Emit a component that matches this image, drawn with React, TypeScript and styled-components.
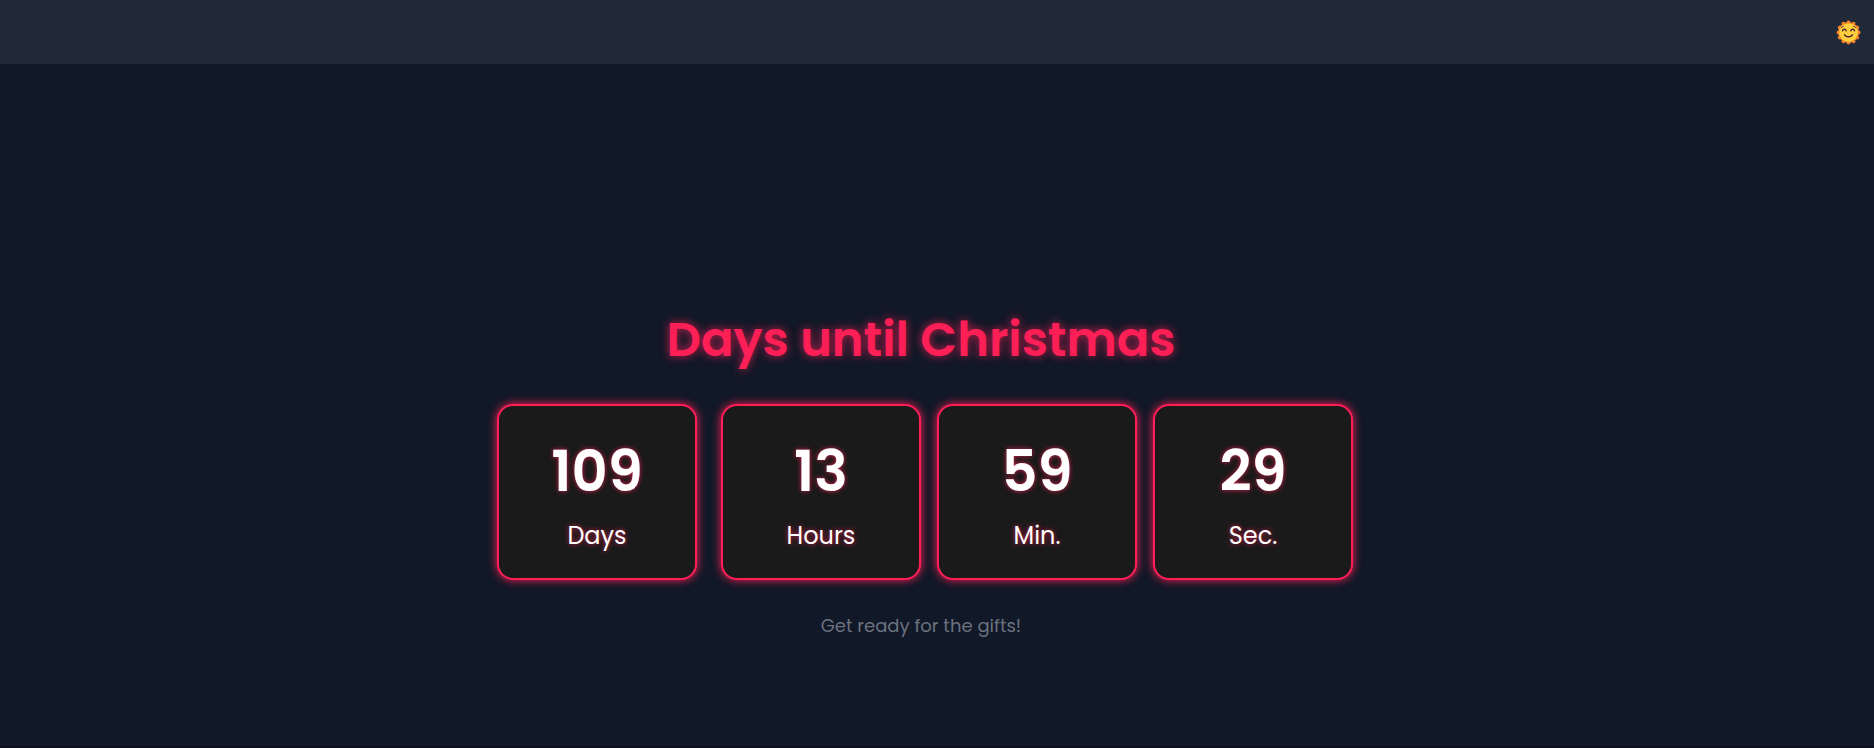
import React from "react";
import styled, { createGlobalStyle } from "styled-components";

const GlobalStyle = createGlobalStyle`
  *, *::before, *::after { box-sizing: border-box; }
  html { background: #0d111c; }
  body {
    margin: 0;
    background: #0d111c;
    font-family: Poppins, Inter, "Liberation Sans", sans-serif;
  }
  h1, p { margin: 0; }
`;

const Page = styled.div`
  display: flex;
  flex-direction: column;
  min-height: calc(100vh - 2px);
  background: #111827;
`;

const Header = styled.header`
  display: flex;
  justify-content: flex-end;
  align-items: center;
  height: 64px;
  padding: 0 13px;
  background: #1f2937;
`;

const ThemeButton = styled.button`
  display: flex;
  padding: 0;
  border: 0;
  background: none;
  cursor: pointer;
`;

const Main = styled.main`
  flex: 1;
  display: flex;
  flex-direction: column;
  align-items: center;
  padding: 248px 32px 96px 0;
`;

const Title = styled.h1`
  color: #ff1f57;
  font-size: 48px;
  font-weight: 600;
  line-height: 56px;
  text-shadow: 0 0 10px rgba(255, 31, 87, 0.8);
`;

const Timer = styled.section`
  display: flex;
  gap: 16px;
  margin-top: 36px;
`;

const Card = styled.div<{ $lead?: boolean }>`
  display: flex;
  flex-direction: column;
  align-items: center;
  gap: 16px;
  width: 200px;
  margin: 0 ${(p) => (p.$lead ? 8 : 0)}px;
  padding: 34px 24px 26px;
  border: 2px solid #ff1f57;
  border-radius: 16px;
  background: #1a1a1a;
  color: #fff;
  box-shadow: 0 0 10px #ff1f57;
  text-shadow: 0 0 5px rgba(255, 31, 87, 0.8);
`;

const Value = styled.span`
  font-size: 56px;
  font-weight: 600;
  line-height: 64px;
`;

const Label = styled.span`
  font-size: 24px;
  line-height: 32px;
`;

const Note = styled.p`
  margin-top: 32px;
  color: #6b7280;
  font-size: 18px;
  line-height: 28px;
`;

const rays = Array.from({ length: 12 }, (_, i) => (i * Math.PI) / 6);

const SunIcon = () => (
  <svg width="25" height="25" viewBox="0 0 24 24" aria-hidden="true">
    <circle cx="12" cy="12" r="10" fill="#f6822b" />
    {rays.map((a) => (
      <circle key={a} cx={12 + 9.6 * Math.sin(a)} cy={12 - 9.6 * Math.cos(a)} r="1.9" fill="#f6822b" />
    ))}
    <circle cx="12" cy="12" r="9" fill="#fdcf3e" />
    <g fill="none" stroke="#4a2338" strokeLinecap="round">
      <path d="M6.2 10.4c.6-2 3-2 3.6 0M14.2 10.4c.6-2 3-2 3.6 0" strokeWidth="1.3" />
      <path d="M8.2 14.2c1.7 2.6 5.9 2.6 7.6 0" strokeWidth="1.4" />
      <path d="M4.9 7.6c.5-.9 1.3-1.4 2.2-1.5M16.9 6.1c.9.1 1.7.6 2.2 1.5" strokeWidth=".9" />
    </g>
  </svg>
);

const units = [
  { value: 109, label: "Days" },
  { value: 13, label: "Hours" },
  { value: 59, label: "Min." },
  { value: 29, label: "Sec." },
];

export default function App() {
  return (
    <>
      <GlobalStyle />
      <Page>
        <Header>
          <ThemeButton type="button" aria-label="Toggle theme">
            <SunIcon />
          </ThemeButton>
        </Header>
        <Main>
          <Title>Days until Christmas</Title>
          <Timer>
            {units.map((u, i) => (
              <Card key={u.label} $lead={i === 0}>
                <Value>{u.value}</Value>
                <Label>{u.label}</Label>
              </Card>
            ))}
          </Timer>
          <Note>Get ready for the gifts!</Note>
        </Main>
      </Page>
    </>
  );
}
